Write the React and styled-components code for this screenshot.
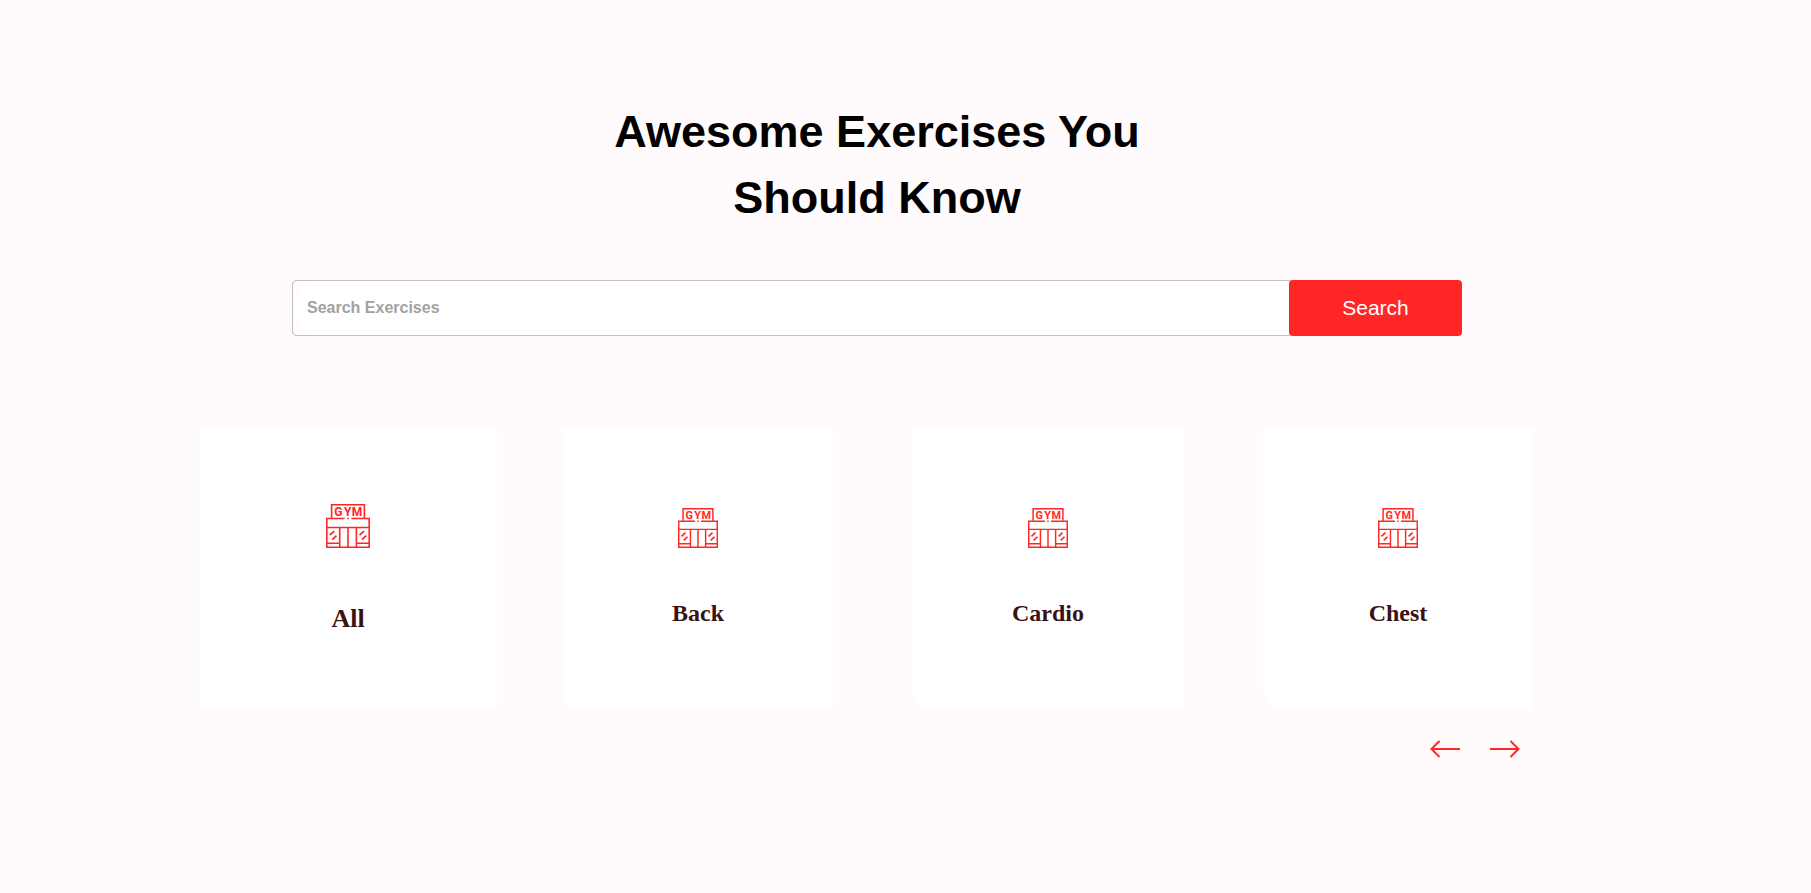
import React from "react";
import styled, { createGlobalStyle } from "styled-components";

const GlobalStyle = createGlobalStyle`
  *, *::before, *::after { box-sizing: border-box; }
  body {
    margin: 0;
    background: #fffafb;
    font-family: "Liberation Sans", Arial, sans-serif;
  }
  button { border: 0; padding: 0; font: inherit; cursor: pointer; }
`;

const Page = styled.main`
  display: flex;
  flex-direction: column;
  align-items: center;
  padding: 99px 57px 99px 0;
`;

const Title = styled.h1`
  margin: 0 0 49px;
  font-size: 45px;
  line-height: 66px;
  font-weight: 700;
  text-align: center;
  color: #000;
`;

const SearchForm = styled.form`
  display: flex;
  width: 100%;
  max-width: 1170px;
  height: 56px;
  margin-bottom: 92px;
`;

const SearchField = styled.div`
  flex: 1;
  min-width: 0;
  margin-right: -4px;
  border: 1px solid #c4c0c1;
  border-radius: 4px;
`;

const SearchInput = styled.input`
  display: block;
  width: 100%;
  height: 100%;
  padding: 0 14px;
  border: 0;
  border-radius: 40px 0 0 40px;
  outline: 0;
  background: #fff;
  font: 700 16px "Liberation Sans", Arial, sans-serif;
  color: #000;

  &::placeholder { color: #a2a2a2; opacity: 1; }
`;

const SearchButton = styled.button`
  position: relative;
  width: 173px;
  border-radius: 4px;
  background: #ff2625;
  color: #fff;
  font-size: 21px;
`;

const Categories = styled.section`
  display: flex;
  flex-direction: column;
  width: 100%;
  max-width: 1408px;
  padding-right: 8px;
`;

const CardRow = styled.div`
  display: grid;
  grid-template-columns: repeat(4, minmax(0, 1fr));
  justify-items: center;
`;

const Card = styled.button`
  display: flex;
  flex-direction: column;
  align-items: center;
  justify-content: center;
  gap: ${({ $active }) => ($active ? 56 : 47)}px;
  width: ${({ $active }) => ($active ? 297 : 270)}px;
  max-width: 100%;
  height: 282px;
  border-radius: ${({ $active }) => ($active ? "0 0 0 4px" : "0 0 0 20px")};
  background: #fff;
`;

const CardLabel = styled.span`
  font-family: "Liberation Serif", "Times New Roman", serif;
  font-weight: 700;
  font-size: ${({ $active }) => ($active ? 26 : 24)}px;
  line-height: ${({ $active }) => ($active ? 30 : 36)}px;
  color: #3a1212;
`;

const Arrows = styled.nav`
  display: flex;
  justify-content: flex-end;
  gap: 20px;
  margin-top: 19px;
  padding-right: 48px;
`;

const ArrowButton = styled.button`
  display: flex;
  align-items: center;
  justify-content: center;
  width: 40px;
  height: 40px;
  background: transparent;
  color: #ff2625;
`;

const SignText = styled.text`
  font: 700 12px Roboto, sans-serif;
  text-anchor: middle;
  fill: #ff2625;
  stroke: none;
`;

function GymIcon({ size }) {
  return (
    <svg width={size} height={size} viewBox="0 0 44 44" fill="none" stroke="#ff2625" strokeWidth="1.6" aria-hidden="true">
      <path d="M5.6 14V.8h32.8V14" />
      <path d="M18.6 14.5H.8v28.7h42.4V14.5H25.4M21.2 14.5h1.6" />
      <path d="M.8 23.5h42.4M13.7 23.5v19.7M22 23.5v19.7M30.4 23.5v19.7M.8 39.3h12.9M30.4 39.3h12.8" />
      <path d="M3.8 31.2l4.4-4M6.3 35.6l4.2-4M33.6 31.2l4.4-4M36 35.6l4.2-4" strokeWidth="1.8" />
      <SignText y="12">
        <tspan x="12.4">G</tspan>
        <tspan x="21.6">Y</tspan>
        <tspan x="31">M</tspan>
      </SignText>
    </svg>
  );
}

function ArrowIcon({ right }) {
  return (
    <svg width="30" height="18" viewBox="0 0 30 18" fill="none" stroke="currentColor" strokeWidth="2" aria-hidden="true">
      <path d={right ? "M0 9h28.5M20.5 1l8 8-8 8" : "M30 9H1.5M9.5 1l-8 8 8 8"} />
    </svg>
  );
}

const categories = ["All", "Back", "Cardio", "Chest"];

export default function App() {
  const [selected, setSelected] = React.useState("All");
  return (
    <>
      <GlobalStyle />
      <Page>
        <Title>
          Awesome Exercises You
          <br />
          Should Know
        </Title>
        <SearchForm onSubmit={(e) => e.preventDefault()}>
          <SearchField>
            <SearchInput type="text" placeholder="Search Exercises" aria-label="Search Exercises" />
          </SearchField>
          <SearchButton type="submit">Search</SearchButton>
        </SearchForm>
        <Categories>
          <CardRow>
            {categories.map((name) => {
              const active = name === selected;
              return (
                <Card key={name} type="button" $active={active} onClick={() => setSelected(name)}>
                  <GymIcon size={active ? 44 : 40} />
                  <CardLabel $active={active}>{name}</CardLabel>
                </Card>
              );
            })}
          </CardRow>
          <Arrows aria-label="Categories">
            <ArrowButton type="button" aria-label="Previous">
              <ArrowIcon />
            </ArrowButton>
            <ArrowButton type="button" aria-label="Next">
              <ArrowIcon right />
            </ArrowButton>
          </Arrows>
        </Categories>
      </Page>
    </>
  );
}
